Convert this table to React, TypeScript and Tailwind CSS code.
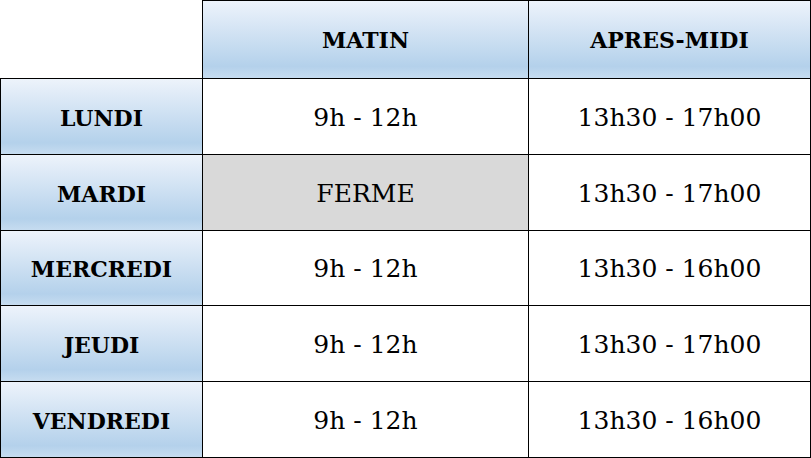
const rows = [
  { day: "LUNDI", am: "9h - 12h", pm: "13h30 - 17h00", h: "h-[76px]" },
  { day: "MARDI", am: "FERME", pm: "13h30 - 17h00", h: "h-[76px]", closed: true },
  { day: "MERCREDI", am: "9h - 12h", pm: "13h30 - 16h00", h: "h-[75px]" },
  { day: "JEUDI", am: "9h - 12h", pm: "13h30 - 17h00", h: "h-[76px]" },
  { day: "VENDREDI", am: "9h - 12h", pm: "13h30 - 16h00", h: "h-[76px]" },
];

// dégradé bleu des cellules d'en-tête
const head =
  "bg-[linear-gradient(to_bottom,#edf3fb_0%,#b4d1eb_85%,#c6dcf0_100%)] font-bold text-[22px]";

export default function App() {
  return (
    <div className="w-[811px] h-[458px] bg-white text-black font-['DejaVu_Serif',serif] text-[25px]">
      <div className="grid grid-cols-[203px_326px_282px]">
        {/* en-tête */}
        <div className="h-[79px] border-r border-b border-black" />
        <div className={`h-[79px] pt-[2px] border-t border-r border-b border-black flex items-center justify-center ${head}`}>
          MATIN
        </div>
        <div className={`h-[79px] pt-[2px] border-t border-r border-b border-black flex items-center justify-center ${head}`}>
          APRES-MIDI
        </div>

        {rows.map((r) => (
          <div key={r.day} className="contents">
            <div className={`${r.h} pt-[3px] border-l border-r border-b border-black flex items-center justify-center ${head}`}>
              {r.day}
            </div>
            <div
              className={`${r.h} pt-[2px] border-r border-b border-black flex items-center justify-center ${
                r.closed ? "bg-[#d9d9d9]" : ""
              }`}
            >
              {r.am}
            </div>
            <div className={`${r.h} pt-[2px] border-r border-b border-black flex items-center justify-center`}>
              {r.pm}
            </div>
          </div>
        ))}
      </div>
    </div>
  );
}
